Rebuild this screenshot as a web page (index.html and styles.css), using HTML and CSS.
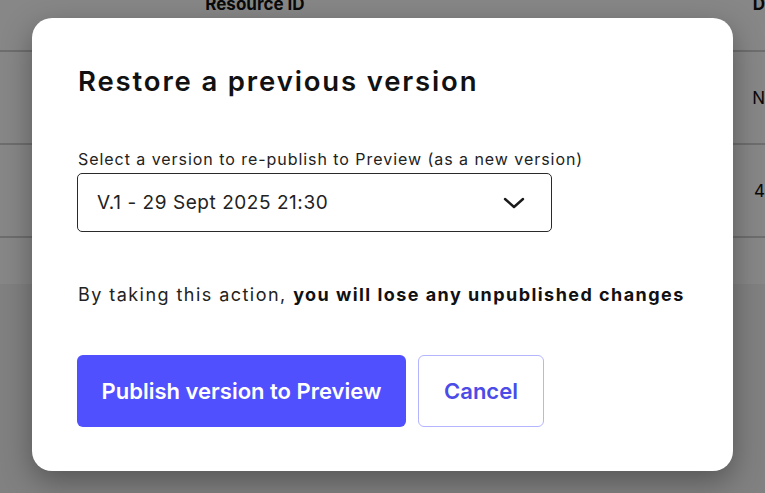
FILE: index.html
```html
<!DOCTYPE html>
<html lang="en">
<head>
<meta charset="utf-8">
<title>Restore a previous version</title>
<link rel="stylesheet" href="styles.css">
</head>
<body>
<div class="page">
  <div class="table">
    <div class="row head">
      <div class="cell c1"></div>
      <div class="cell c2">Resource ID</div>
      <div class="cell c3">D</div>
    </div>
    <div class="row">
      <div class="cell c1"></div>
      <div class="cell c2"></div>
      <div class="cell c3">N</div>
    </div>
    <div class="row">
      <div class="cell c1"></div>
      <div class="cell c2"></div>
      <div class="cell c3">4</div>
    </div>
    <div class="foot"></div>
  </div>
</div>
<div class="overlay"></div>
<div class="modal" role="dialog" aria-labelledby="mt">
  <h1 id="mt" class="title">Restore a previous version</h1>
  <label class="label" for="ver">Select a version to re-publish to Preview (as a new version)</label>
  <div class="select" id="ver">
    <span class="select-text">V.1 - 29 Sept 2025 21:30</span>
    <svg class="chev" width="22" height="12" viewBox="0 0 22 12" aria-hidden="true">
      <path d="M2 2 L11 10 L20 2" fill="none" stroke="#1a1a1a" stroke-width="2.4" stroke-linecap="round" stroke-linejoin="round"/>
    </svg>
  </div>
  <p class="warn">By taking this action, <strong>you will lose any unpublished changes</strong></p>
  <div class="actions">
    <button class="btn primary">Publish version to Preview</button>
    <button class="btn secondary">Cancel</button>
  </div>
</div>
</body>
</html>
```
FILE: styles.css
```css
* { box-sizing: border-box; }
html, body { margin: 0; padding: 0; }
body {
  width: 765px;
  height: 493px;
  overflow: hidden;
  background: #f4f4f4;
  font-family: "Inter", "Noto Sans", sans-serif;
  color: #1a1a1a;
  position: relative;
}
.page { width: 765px; }
.table {
  margin-top: -23px;
  background: #ffffff;
}
.row {
  display: flex;
  height: 93px;
  border-bottom: 2px solid #d0d0d0;
}
.row.head {
  height: 75px;
  align-items: flex-start;
}
.cell {
  font-size: 17px;
  color: #111;
  display: flex;
  align-items: center;
}
.row.head .cell { font-weight: 700; height: 54px; }
.c1 { width: 207px; }
.c2 { width: 552px; }
.c3 { flex: 1; }
.foot { height: 46px; background: #ffffff; }
.overlay {
  position: absolute;
  inset: 0;
  background: rgba(0, 0, 0, 0.47);
}
.modal {
  position: absolute;
  left: 32px;
  top: 18px;
  width: 701px;
  height: 453px;
  background: #ffffff;
  border-radius: 20px;
  padding: 46px 46px 0 45px;
  box-shadow: 0 10px 30px rgba(0, 0, 0, 0.35);
  display: flex;
  flex-direction: column;
  align-items: flex-start;
}
.title {
  margin: 0 0 0 1px;
  font-size: 27.5px;
  font-weight: 600;
  line-height: 34px;
  color: #111;
  letter-spacing: 1.85px;
}
.label {
  margin: 52px 0 0 1px;
  font-size: 16px;
  line-height: 18px;
  color: #222;
  letter-spacing: 0.95px;
}
.select {
  margin-top: 5px;
  width: 475px;
  height: 59px;
  border: 1.5px solid #2a2a2a;
  border-radius: 5px;
  display: flex;
  align-items: center;
  justify-content: space-between;
  padding: 0 26px 0 19px;
}
.select-text {
  font-size: 19px;
  color: #222;
  letter-spacing: 0.55px;
}
.chev { display: block; }
.warn {
  margin: 51px 0 0 1px;
  font-size: 18px;
  line-height: 24px;
  color: #222;
  letter-spacing: 1.45px;
}
.warn strong { font-weight: 700; color: #111; }
.actions {
  margin-top: 48px;
  display: flex;
  gap: 12px;
}
.btn {
  height: 72px;
  border-radius: 6px;
  font-family: "Inter", "Noto Sans", sans-serif;
  font-size: 22px;
  font-weight: 600;
  cursor: pointer;
}
.primary {
  width: 329px;
  background: #5050ff;
  color: #ffffff;
  border: none;
}
.secondary {
  width: 126px;
  background: #ffffff;
  color: #4b4be8;
  border: 1.5px solid #b4b4ff;
}
```
